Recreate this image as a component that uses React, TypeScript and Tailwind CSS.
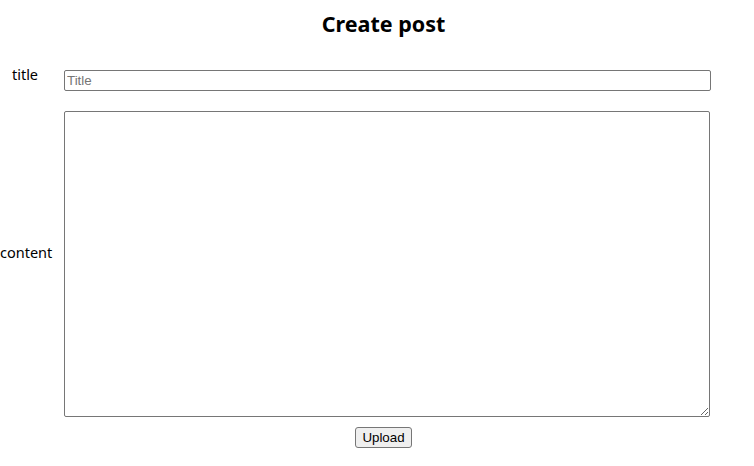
import React, { useState } from "react";

export default function App() {
  const [title, setTitle] = useState("");
  const [content, setContent] = useState("");

  return (
    <div className="w-[754px] h-[466px] bg-white text-black font-['Noto_Sans',sans-serif] pl-[13px] flex flex-col items-center">
      <h1 className="mt-[9px] text-[21.5px] leading-[30px] font-bold">Create post</h1>

      <div className="w-full flex flex-col ml-[-26px] mt-[22px]">
        {/* title row */}
        <div className="flex items-start">
          <label className="w-[50px] text-center text-[14.5px] leading-[24px] shrink-0 pt-[1px]">title</label>
          <input
            value={title}
            onChange={(e) => setTitle(e.target.value)}
            placeholder="Title"
            className="ml-[14px] mt-[9px] w-[647px] h-[21px] border border-[#767676] rounded-[2px] px-[2px] text-[13.33px] font-['Liberation_Sans',Arial,sans-serif] placeholder:text-[#757575] outline-none"
          />
        </div>

        {/* content row */}
        <div className="flex items-center mt-[20px]">
          <label className="w-[50px] text-center text-[14.5px] leading-[24px] shrink-0 pb-[24px] whitespace-nowrap">content</label>
          <textarea
            value={content}
            onChange={(e) => setContent(e.target.value)}
            className="ml-[14px] w-[646px] h-[306px] border border-[#767676] rounded-[2px] p-[2px] text-[13.33px] font-['Liberation_Mono',monospace] outline-none"
          />
        </div>
      </div>

      <button className="mt-[10px] h-[21px] px-[6px] border border-[#767676] rounded-[3px] bg-[#efefef] text-[13.33px] leading-none font-['Liberation_Sans',Arial,sans-serif]">
        Upload
      </button>
    </div>
  );
}
